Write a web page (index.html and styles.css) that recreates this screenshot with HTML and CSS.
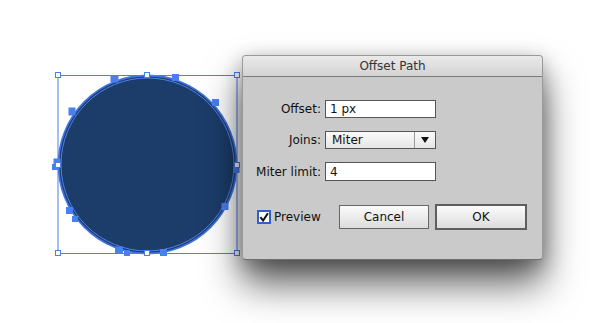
FILE: index.html
```html
<!DOCTYPE html>
<html lang="en">

<head>
  <meta charset="UTF-8">
  <meta name="viewport" content="width=device-width, initial-scale=1.0">
  <title>Offset Path</title>
  <link rel="stylesheet" href="styles.css">
</head>

<body>

  <div class="canvas">
    <svg class="artwork" width="600" height="323" viewBox="0 0 600 323">
      <circle cx="147.5" cy="164.5" r="89" fill="#1c3c69" stroke="#3f73dc" stroke-width="1.8"/>
      <circle cx="147.5" cy="164.5" r="86.5" fill="none" stroke="#4d82ea" stroke-width="1"/>
      <rect x="58" y="75.5" width="179" height="178" fill="none" stroke="#4a7fee" stroke-width="1"/>

      <g fill="#4a7ff0">
        <rect x="110.5" y="75.5" width="8" height="7"/>
        <rect x="172" y="74" width="7" height="7"/>
        <rect x="212" y="99" width="7" height="7"/>
        <rect x="68.5" y="107.5" width="7" height="8"/>
        <rect x="53.5" y="158.5" width="7" height="6"/>
        <rect x="52" y="164" width="6" height="6"/>
        <rect x="233.5" y="167" width="6" height="6"/>
        <rect x="66" y="207" width="7" height="7"/>
        <rect x="72" y="216" width="6" height="6"/>
        <rect x="221.5" y="203" width="7" height="7"/>
        <rect x="115" y="246.5" width="8" height="7"/>
        <rect x="124" y="250" width="6" height="6"/>
        <rect x="160" y="249" width="7" height="7"/>
      </g>

      <g fill="#fff" stroke="#4a7fee" stroke-width="1">
        <rect x="55.5" y="72.5" width="5" height="5"/>
        <rect x="144.5" y="72.5" width="5" height="5"/>
        <rect x="234.5" y="72.5" width="5" height="5"/>
        <rect x="55.5" y="162.5" width="5" height="5"/>
        <rect x="234.5" y="162.5" width="5" height="5"/>
        <rect x="55.5" y="250.5" width="5" height="5"/>
        <rect x="144.5" y="250.5" width="5" height="5"/>
        <rect x="234.5" y="250.5" width="5" height="5"/>
      </g>
    </svg>

    <div class="dialog">
      <div class="dialog__title">Offset Path</div>

      <div class="dialog__form">
        <label class="dialog__label" for="offset">Offset:</label>
        <input class="dialog__input" id="offset" type="text" value="1 px">

        <label class="dialog__label">Joins:</label>
        <div class="dialog__select">
          <span class="dialog__select-value">Miter</span>
          <span class="dialog__select-arrow"></span>
        </div>

        <label class="dialog__label" for="miter">Miter limit:</label>
        <input class="dialog__input dialog__input--last" id="miter" type="text" value="4">
      </div>

      <div class="dialog__actions">
        <label class="dialog__check">
          <span class="dialog__box">
            <svg width="11" height="11" viewBox="0 0 11 11">
              <path d="M1.5 5 L4.5 8.8 L9.8 0.8" fill="none" stroke="#111" stroke-width="2.2"/>
            </svg>
          </span>
          Preview
        </label>

        <div class="dialog__buttons">
          <button class="dialog__button" type="button">Cancel</button>
          <button class="dialog__button dialog__button--default" type="button">OK</button>
        </div>
      </div>
    </div>
  </div>

</body>

</html>
```

FILE: styles.css
```css
*,
*:after,
*:before {
  margin: 0;
  padding: 0;
  box-sizing: border-box;
}

body {
  font-family: "DejaVu Sans", sans-serif;
  background: #fff;
  overflow: hidden;
}

.canvas {
  position: relative;
  width: 600px;
  height: 323px;
}

.artwork {
  position: absolute;
  left: 0;
  top: 0;
}

.dialog {
  position: absolute;
  left: 242px;
  top: 55px;
  width: 301px;
  height: 205px;
  background: #cacaca;
  border: 1px solid #999;
  border-bottom-color: #6e6e6e;
  border-radius: 4px;
  box-shadow: 0 24px 38px rgba(0, 0, 0, 0.62), 0 6px 20px rgba(0, 0, 0, 0.3);
}

.dialog__title {
  height: 21px;
  line-height: 20px;
  text-align: center;
  font-size: 12px;
  color: #333;
  background: linear-gradient(#eaeaea, #d3d3d3);
  border-bottom: 1px solid #7c7c7c;
  border-radius: 3px 3px 0 0;
}

.dialog__form {
  display: grid;
  grid-template-columns: 78px 111px;
  column-gap: 4px;
  row-gap: 13px;
  padding-top: 23px;
  align-items: center;
}

.dialog__label {
  text-align: right;
  font-size: 12px;
  color: #111;
}

.dialog__input {
  height: 18px;
  border: 1px solid #555;
  background: #fff;
  font: 12px "DejaVu Sans", sans-serif;
  color: #111;
  padding: 0 4px;
  outline: none;
}

.dialog__input--last {
  height: 19px;
}

.dialog__select {
  display: flex;
  align-items: center;
  height: 18px;
  border: 1px solid #555;
  background: linear-gradient(#fafafa, #e6e6e6);
  font-size: 12px;
  color: #111;
}

.dialog__select-value {
  flex: 1;
  padding-left: 6px;
  height: 100%;
  line-height: 16px;
  border-right: 1px solid #9a9a9a;
  margin-right: 6px;
}

.dialog__select-arrow {
  width: 0;
  height: 0;
  margin-right: 6px;
  border-left: 4px solid transparent;
  border-right: 4px solid transparent;
  border-top: 6px solid #111;
}

.dialog__actions {
  display: flex;
  align-items: center;
  justify-content: space-between;
  padding: 23px 15px 0 14px;
}

.dialog__check {
  display: flex;
  align-items: center;
  gap: 3px;
  font-size: 12px;
  color: #111;
}

.dialog__box {
  display: flex;
  align-items: center;
  justify-content: center;
  width: 14px;
  height: 14px;
  border: 2px solid #2f5fd0;
  background: #fff;
}

.dialog__buttons {
  display: flex;
  align-items: center;
  gap: 6px;
}

.dialog__button {
  width: 90px;
  height: 24px;
  border: 1px solid #666;
  background: linear-gradient(#fbfbfb, #dcdcdc);
  font: 12px "DejaVu Sans", sans-serif;
  color: #111;
}

.dialog__button--default {
  width: 92px;
  height: 26px;
  border: 2px solid #5e5e5e;
}
```
